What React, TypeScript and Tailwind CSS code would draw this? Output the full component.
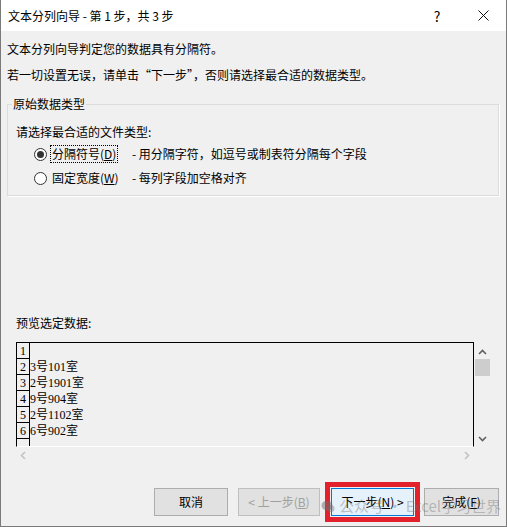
import React from "react";

function Radio({ checked }: { checked?: boolean }) {
  return (
    <span className="flex h-[13px] w-[13px] items-center justify-center rounded-full border border-[#333] bg-white">
      {checked && <span className="h-[7px] w-[7px] rounded-full bg-[#333]" />}
    </span>
  );
}

function Chevron({ dir, color }: { dir: "up" | "down" | "left" | "right"; color: string }) {
  const d = {
    up: "M1 6 L4.5 2.5 L8 6",
    down: "M1 3 L4.5 6.5 L8 3",
    left: "M6 1 L2.5 4.5 L6 8",
    right: "M3 1 L6.5 4.5 L3 8",
  }[dir];
  return (
    <svg width="9" height="9" viewBox="0 0 9 9">
      <path d={d} fill="none" stroke={color} strokeWidth="1.6" />
    </svg>
  );
}

export default function App() {
  const rows = ["", "3号101室", "2号1901室", "9号904室", "2号1102室", "6号902室"];

  return (
    <div className="relative flex h-[527px] w-[507px] flex-col overflow-hidden border-x border-b border-[#7a7a7a] bg-[#f0f0f0] font-['Noto_Sans_CJK_SC',sans-serif] text-[12px] text-black">
      {/* title bar */}
      <div className="flex h-[31px] shrink-0 items-center bg-white">
        <span className="pl-[7px] leading-[16px]">文本分列向导 - 第 1 步，共 3 步</span>
        <span className="flex-1" />
        <span className="w-[46px] text-center text-[14px] leading-[16px]">?</span>
        <span className="flex w-[46px] items-center justify-center">
          <svg width="11" height="11" viewBox="0 0 11 11">
            <path d="M0.5 0.5 L10.5 10.5 M10.5 0.5 L0.5 10.5" stroke="#111" strokeWidth="1" />
          </svg>
        </span>
      </div>

      <div className="flex flex-1 flex-col pl-[6px] pr-[7px]">
        <div className="mt-[10px] h-[16px] leading-[16px]">文本分列向导判定您的数据具有分隔符。</div>
        <div className="mt-[10px] h-[16px] leading-[16px]">若一切设置无误，请单击“下一步”，否则请选择最合适的数据类型。</div>

        <fieldset className="mt-[13px] border border-[#dcdcdc] p-0 shadow-[1px_1px_0_#fff]">
          <legend className="ml-[4px] px-[1px] leading-[16px]">原始数据类型</legend>
          <div className="flex flex-col pb-[7px] pl-[8px]">
            <div className="mt-[12px] h-[16px] leading-[16px]">请选择最合适的文件类型:</div>
            <div className="mt-[4px] flex h-[20px] items-center">
              <span className="ml-[18px]"><Radio checked /></span>
              <span className="w-[85px] pl-[3px]">
                <span className="inline-block border border-dotted border-black px-[1px] leading-[16px]">
                  分隔符号(<u>D</u>)
                </span>
              </span>
              <span className="leading-[16px]">- 用分隔字符，如逗号或制表符分隔每个字段</span>
            </div>
            <div className="mt-[4px] flex h-[20px] items-center">
              <span className="ml-[18px]"><Radio /></span>
              <span className="w-[85px] pl-[3px]">
                <span className="inline-block border border-transparent px-[1px] leading-[16px]">
                  固定宽度(<u>W</u>)
                </span>
              </span>
              <span className="leading-[16px]">- 每列字段加空格对齐</span>
            </div>
          </div>
        </fieldset>

        <div className="ml-[9px] mt-[119px] h-[16px] leading-[16px]">预览选定数据:</div>

        {/* preview */}
        <div className="ml-[9px] mt-[11px] flex flex-col">
          <div className="flex">
            <div className="h-[105px] w-[458px] overflow-hidden border-x border-b border-t border-black border-b-white font-['Liberation_Serif','Noto_Sans_CJK_SC',serif]">
              {rows.map((r, i) => (
                <div key={i} className="flex h-[16px]">
                  <div className="w-[13px] shrink-0 border-b border-r border-black text-center leading-[17px]">{i + 1}</div>
                  <div className="leading-[17px]">{r}</div>
                </div>
              ))}
              <div className="h-[16px] w-[13px] border-r border-black" />
            </div>
            <div className="flex h-[105px] w-[17px] flex-col items-center">
              <div className="mt-[6px]"><Chevron dir="up" color="#606060" /></div>
              <div className="mt-[2px] h-[17px] w-[15px] bg-[#cdcdcd]" />
              <div className="flex-1" />
              <div className="mb-[4px]"><Chevron dir="down" color="#606060" /></div>
            </div>
          </div>
          <div className="flex h-[16px] w-[458px] items-center justify-between px-[3px]">
            <Chevron dir="left" color="#c2c2c2" />
            <Chevron dir="right" color="#c2c2c2" />
          </div>
        </div>

        {/* buttons */}
        <div className="mt-[25px] flex h-[28px] items-center justify-end">
          <button className="h-[28px] w-[74px] border border-[#adadad] bg-[#e1e1e1] leading-[16px]">取消</button>
          <button className="ml-[10px] h-[28px] w-[82px] border border-[#bfbfbf] bg-[#e1e1e1] leading-[16px] text-[#a0a0a0]">
            &lt; 上一步(<u>B</u>)
          </button>
          <div className="ml-[5px] border-[5px] border-[#e3212d] p-[1px]">
            <button className="flex h-[28px] w-[83px] items-center justify-center border border-[#0078d7] bg-[#e5f1fb] leading-[16px]">
              下一步(<u>N</u>)&nbsp;&gt;
            </button>
          </div>
          <button className="ml-[4px] h-[28px] w-[75px] border border-[#adadad] bg-[#e1e1e1] leading-[16px]">
            完成(<u>F</u>)
          </button>
        </div>
      </div>

      {/* watermark */}
      <div className="pointer-events-none absolute left-[320px] top-[497px] flex items-center gap-[4px] text-[15px] leading-[18px] text-[rgba(110,110,110,0.4)]">
        <svg width="14" height="13" viewBox="0 0 14 13">
          <ellipse cx="6" cy="5.5" rx="5.5" ry="4.8" fill="rgba(110,110,110,0.5)" />
          <ellipse cx="9.5" cy="8.5" rx="4" ry="3.5" fill="rgba(110,110,110,0.4)" />
        </svg>
        <span>公众号 · Excel学习世界</span>
      </div>
    </div>
  );
}
